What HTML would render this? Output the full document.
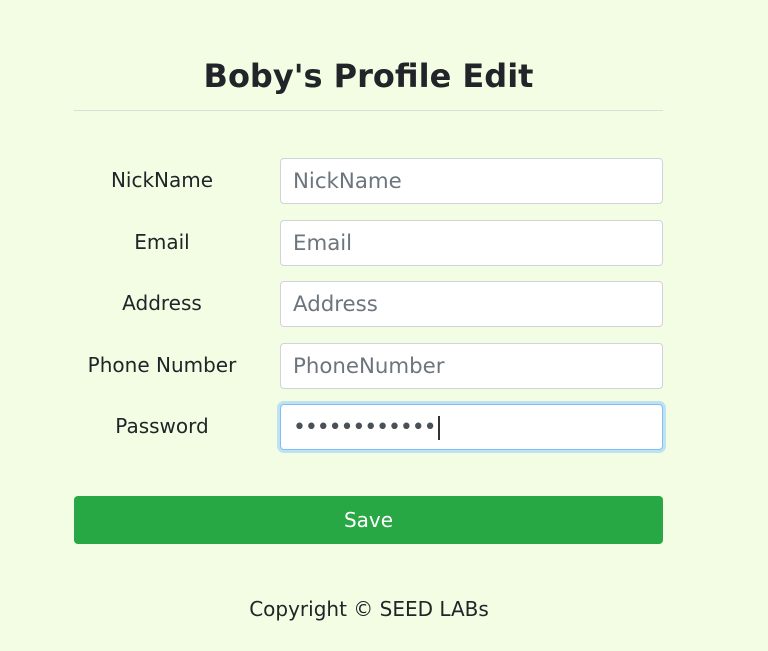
<!DOCTYPE html>
<html><head><style>
html,body{margin:0;padding:0;}
body{width:768px;height:651px;background:#f3fde3;font-family:"DejaVu Sans","Liberation Sans",sans-serif;color:#212529;position:relative;overflow:hidden;}
h1{position:absolute;left:74px;width:589px;top:54px;margin:0;text-align:center;font-size:32px;font-weight:bold;line-height:44px;}
.hr{position:absolute;left:74px;width:589px;top:110px;height:1px;background:#dcdfd6;}
.lbl{position:absolute;left:74px;width:176px;text-align:center;font-size:20px;line-height:46px;top:0;}
.inp{position:absolute;left:280px;height:44px;background:#fff;border:1px solid #ced4da;border-radius:4px;font-size:21.3px;line-height:46px;color:#6c757d;padding-left:12px;box-sizing:content-box;width:369px;}
.focus{border-color:#80bdff;box-shadow:0 0 0 3px #bfe3ee;color:#495057;}
.btn{position:absolute;left:74px;width:589px;top:496px;height:48px;background:#28a745;border-radius:4px;color:#fff;text-align:center;line-height:48px;font-size:20px;}
.foot{position:absolute;left:0;width:738px;text-align:center;top:596px;font-size:20px;line-height:26px;}
</style></head><body>
<h1>Boby's Profile Edit</h1>
<div class="hr"></div>
<div class="lbl" style="top:157px">NickName</div>
<div class="inp" style="top:158px">NickName</div>
<div class="lbl" style="top:219px">Email</div>
<div class="inp" style="top:220px">Email</div>
<div class="lbl" style="top:280px">Address</div>
<div class="inp" style="top:281px">Address</div>
<div class="lbl" style="top:342px">Phone Number</div>
<div class="inp" style="top:343px">PhoneNumber</div>
<div class="lbl" style="top:403px">Password</div>
<div class="inp focus" style="top:404px"><span style="font-size:22px;letter-spacing:-1.1px">••••••••••••</span><span style="display:inline-block;width:2px;height:24px;background:#333;vertical-align:middle;margin-left:2px"></span></div>
<div class="btn">Save</div>
<div class="foot">Copyright © SEED LABs</div>
</body></html>
